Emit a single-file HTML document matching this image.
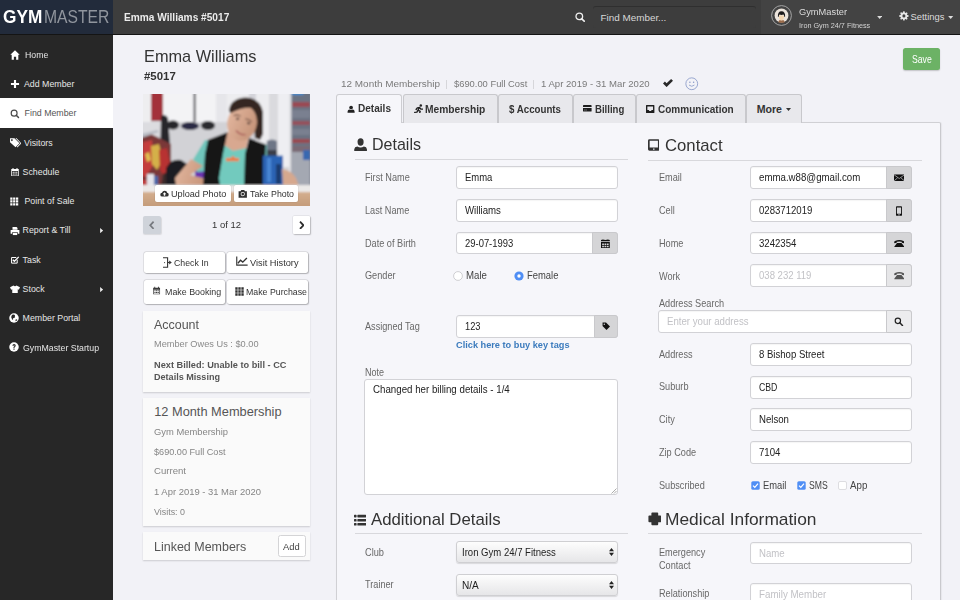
<!DOCTYPE html>
<html><head><meta charset="utf-8"><title>GymMaster</title>
<style>
html,body{margin:0;padding:0;width:960px;height:600px;overflow:hidden;background:#f2f2f7}
body{position:relative;font-family:"Liberation Sans",sans-serif}
.t{position:absolute;white-space:nowrap;line-height:1}
.r{position:absolute;box-sizing:border-box}
</style></head><body>
<div class="r" style="left:0.00px;top:0.00px;width:960.00px;height:600.00px;background:#f2f2f7"></div>
<div class="r" style="left:0.00px;top:0.00px;width:960.00px;height:34.00px;background:#3d3d3d"></div>
<div class="r" style="left:0.00px;top:33.60px;width:960.00px;height:1.40px;background:#141414"></div>
<div class="r" style="left:0.00px;top:0.00px;width:113.00px;height:33.60px;background:#222b3b"></div>
<div class="r" style="left:0.00px;top:35.00px;width:113.00px;height:565.00px;background:#272727"></div>
<div class="t" style="left:2.70px;top:8.97px;font-size:17.8px;color:#fff;font-weight:700;transform:scaleX(0.9692);transform-origin:0 0;">GYM</div>
<div class="t" style="left:43.50px;top:8.97px;font-size:17.8px;color:#90959d;transform:scaleX(0.8831);transform-origin:0 0;">MASTER</div>
<div class="t" style="left:123.50px;top:12.53px;font-size:10.2px;color:#ececec;font-weight:700;transform:scaleX(0.9949);transform-origin:0 0;">Emma Williams #5017</div>
<div class="r" style="left:592.50px;top:6.00px;width:163.50px;height:22.00px;background:#3d3d3d;border-radius:3px;box-shadow:inset 0 1px 0.6px rgba(0,0,0,0.22)"></div>
<svg class="r" style="left:575.20px;top:11.60px;" width="10" height="10" viewBox="0 0 10 10" fill="#fff"><circle cx="4.3" cy="4.4" r="3.3" fill="none" stroke="#f0f0f0" stroke-width="1.3"/><path d="M6.7 6.8 L9.2 9.2" stroke="#f0f0f0" stroke-width="1.6" stroke-linecap="round"/></svg>
<div class="t" style="left:600.50px;top:13.38px;font-size:9.9px;color:#d8d8d8;">Find Member...</div>
<div class="r" style="left:760.60px;top:0.00px;width:199.40px;height:33.60px;background:#434343"></div>
<svg class="r" style="left:771.00px;top:4.80px;" width="21" height="21" viewBox="0 0 21 21" fill="#000"><circle cx="10.5" cy="10.5" r="9.9" fill="none" stroke="#b0b0b0" stroke-width="0.9"/><circle cx="10.5" cy="10.5" r="6.9" fill="#ece4dc"/><path d="M8.2 15.2 H12.8 L13.8 17.2 Q10.5 18.3 7.2 17.2Z" fill="#9a6a48"/><path d="M7.9 10.5 Q7.9 15.3 10.5 15.5 Q13.1 15.3 13.1 10.5Z" fill="#f3d6b0"/><path d="M6.9 11.8 Q6.6 6.3 10.5 6.3 Q14.4 6.3 14.1 11.8 L13.2 11.8 Q13.2 9.8 12.5 9.6 Q10.5 10.2 8.5 9.6 Q7.8 9.8 7.8 11.8Z" fill="#1c1a1a"/></svg>
<div class="t" style="left:798.50px;top:7.44px;font-size:9.6px;color:#dcdcdc;transform:scaleX(0.9677);transform-origin:0 0;">GymMaster</div>
<div class="t" style="left:798.50px;top:22.04px;font-size:7.6px;color:#d4d4d4;transform:scaleX(0.9537);transform-origin:0 0;">Iron Gym 24/7 Fitness</div>
<svg class="r" style="left:877.00px;top:15.60px;" width="5.4" height="3.4" viewBox="0 0 6 4" fill="#ddd"><path d="M0 0H6L3 3.5Z"/></svg>
<svg class="r" style="left:898.80px;top:10.80px;" width="9.8" height="9.8" viewBox="0 0 16 16" fill="#e8e8e8"><path d="M6.9 0.5h2.2l0.4 2.1 1.3 0.55 1.8-1.2 1.55 1.55-1.2 1.8 0.55 1.3 2.1 0.4v2.2l-2.1 0.4-0.55 1.3 1.2 1.8-1.55 1.55-1.8-1.2-1.3 0.55-0.4 2.1H6.9l-0.4-2.1-1.3-0.55-1.8 1.2-1.55-1.55 1.2-1.8-0.55-1.3-2.1-0.4V6.9l2.1-0.4 0.55-1.3-1.2-1.8 1.55-1.55 1.8 1.2 1.3-0.55Z"/><circle cx="8" cy="8" r="2.5" fill="#404040"/></svg>
<div class="t" style="left:910.50px;top:11.81px;font-size:9.4px;color:#dcdcdc;">Settings</div>
<svg class="r" style="left:948.20px;top:15.80px;" width="5.4" height="3.4" viewBox="0 0 6 4" fill="#ddd"><path d="M0 0H6L3 3.5Z"/></svg>
<svg class="r" style="left:9.60px;top:49.95px;" width="10" height="10" viewBox="0 0 16 16" fill="#fff"><path d="M8 0.5 L15.5 7.6 L13.3 7.6 L13.3 15.5 L9.8 15.5 L9.8 10.8 L6.2 10.8 L6.2 15.5 L2.7 15.5 L2.7 7.6 L0.5 7.6 Z"/></svg>
<div class="t" style="left:24.60px;top:50.67px;font-size:8.8px;color:#e6e6e6;transform:scaleX(0.9924);transform-origin:0 0;">Home</div>
<svg class="r" style="left:9.60px;top:79.25px;" width="10" height="10" viewBox="0 0 16 16" fill="#fff"><path d="M6.3 1.5h3.4v4.8h4.8v3.4H9.7v4.8H6.3V9.7H1.5V6.3h4.8z"/></svg>
<div class="t" style="left:24.00px;top:79.97px;font-size:8.8px;color:#e6e6e6;">Add Member</div>
<div class="r" style="left:0.00px;top:98.40px;width:113.00px;height:30.10px;background:#fff"></div>
<svg class="r" style="left:9.60px;top:108.55px;" width="10" height="10" viewBox="0 0 16 16" fill="#4a4a4a"><circle cx="6.6" cy="6.6" r="4.7" fill="none" stroke="#4a4a4a" stroke-width="1.9"/><path d="M10 10 L13.6 13.6" stroke="#4a4a4a" stroke-width="2.3" stroke-linecap="round"/></svg>
<div class="t" style="left:24.60px;top:109.27px;font-size:8.8px;color:#555;">Find Member</div>
<svg class="r" style="left:9.80px;top:137.65px;" width="11.5" height="10" viewBox="0 0 16 14" fill="#fff"><path d="M0 0.5 H6.2 L13.2 7.5 L7.7 13 L0 5.8 Z M2.6 1.8 A1.2 1.2 0 1 0 2.61 1.8Z" fill-rule="evenodd"/><path d="M7.6 0.5 H9.2 L16 7.5 L10.3 13.2 L9.5 12.4 L14.4 7.5Z"/></svg>
<div class="t" style="left:24.00px;top:138.57px;font-size:8.8px;color:#e6e6e6;">Visitors</div>
<svg class="r" style="left:9.60px;top:167.15px;" width="10" height="10" viewBox="0 0 16 16" fill="#fff"><path d="M2 3h12v11.5H2z M3.2 6.5v7h9.6v-7z" fill-rule="evenodd"/><path d="M4 1.5h1.6v3H4z M10.4 1.5H12v3h-1.6z"/><path d="M4.2 7.6h2v1.6h-2z M7 7.6h2v1.6H7z M9.8 7.6h2v1.6h-2z M4.2 10.4h2v1.6h-2z M7 10.4h2v1.6H7z M9.8 10.4h2v1.6h-2z"/></svg>
<div class="t" style="left:22.60px;top:167.87px;font-size:8.8px;color:#e6e6e6;">Schedule</div>
<svg class="r" style="left:10.00px;top:196.85px;" width="8.5" height="8.8" viewBox="0 0 16 16" fill="#fff"><path d="M0.5 0.5h4.2v4.2H0.5z M5.9 0.5h4.2v4.2H5.9z M11.3 0.5h4.2v4.2h-4.2z M0.5 5.9h4.2v4.2H0.5z M5.9 5.9h4.2v4.2H5.9z M11.3 5.9h4.2v4.2h-4.2z M0.5 11.3h4.2v4.2H0.5z M5.9 11.3h4.2v4.2H5.9z M11.3 11.3h4.2v4.2h-4.2z"/></svg>
<div class="t" style="left:24.50px;top:197.17px;font-size:8.8px;color:#e6e6e6;">Point of Sale</div>
<svg class="r" style="left:9.60px;top:225.75px;" width="10" height="10" viewBox="0 0 16 16" fill="#fff"><path d="M4 1.5h6.5l1.5 1.5v3H4z"/><path d="M1 6.5h14v6h-2.5v-2.5h-9v2.5H1z"/><path d="M4.5 11h7v3.5h-7z"/></svg>
<div class="t" style="left:22.60px;top:226.47px;font-size:8.8px;color:#e6e6e6;">Report &amp; Till</div>
<svg class="r" style="left:99.80px;top:228.15px;" width="3.2" height="5.2" viewBox="0 0 4 7" fill="#eee"><path d="M0 0 L4 3.5 L0 7Z"/></svg>
<svg class="r" style="left:9.60px;top:255.05px;" width="10" height="10" viewBox="0 0 16 16" fill="#fff"><path d="M11.5 7.5v5.5h-9v-9h7.5" fill="none" stroke="#fff" stroke-width="1.6"/><path d="M4.5 7.5 L7 10 L14 3" fill="none" stroke="#fff" stroke-width="2"/></svg>
<div class="t" style="left:22.60px;top:255.77px;font-size:8.8px;color:#e6e6e6;">Task</div>
<svg class="r" style="left:9.60px;top:284.35px;" width="10" height="10" viewBox="0 0 16 16" fill="#fff"><path d="M5.6 2.5 Q8 4.6 10.4 2.5 L16 5.2 L14.2 9 L12.4 8.4 L12.4 14.5 L3.6 14.5 L3.6 8.4 L1.8 9 L0 5.2Z"/></svg>
<div class="t" style="left:22.60px;top:285.07px;font-size:8.8px;color:#e6e6e6;">Stock</div>
<svg class="r" style="left:99.80px;top:286.75px;" width="3.2" height="5.2" viewBox="0 0 4 7" fill="#eee"><path d="M0 0 L4 3.5 L0 7Z"/></svg>
<svg class="r" style="left:8.90px;top:313.05px;" width="10" height="10" viewBox="0 0 16 16" fill="#fff"><circle cx="8" cy="8" r="7.6"/><path d="M5.2 2.6 Q8.5 1.6 9.6 3.6 Q8.8 5.4 9.8 6.4 Q9 8.2 7.2 8 Q5.8 9 6.6 10.6 Q5.2 11.2 4.4 9.6 Q4.8 8 3.6 7 Q3.4 4.2 5.2 2.6Z M10.6 10.4 Q12.4 9.6 13.2 10.6 Q12.4 12.8 10.8 13.2 Q10 12 10.6 10.4Z" fill="#272727"/></svg>
<div class="t" style="left:22.60px;top:314.37px;font-size:8.8px;color:#e6e6e6;">Member Portal</div>
<svg class="r" style="left:8.90px;top:342.35px;" width="10" height="10" viewBox="0 0 16 16" fill="#fff"><circle cx="8" cy="8" r="7.6"/><path d="M5.4 6 Q5.6 3.3 8.1 3.3 Q10.8 3.4 10.8 5.8 Q10.8 7.3 9.2 8.1 Q8.9 8.4 8.9 9.4 L7.1 9.4 Q7 7.6 8 7 Q9 6.5 8.9 5.9 Q8.8 5.1 8 5.1 Q7.2 5.1 7.1 6.2Z M7.1 10.4h1.8v2H7.1z" fill="#272727"/></svg>
<div class="t" style="left:22.60px;top:343.67px;font-size:8.8px;color:#e6e6e6;transform:scaleX(0.9975);transform-origin:0 0;">GymMaster Startup</div>
<div class="t" style="left:144.20px;top:48.36px;font-size:16.4px;color:#333;transform:scaleX(0.9958);transform-origin:0 0;">Emma Williams</div>
<div class="t" style="left:144.20px;top:71.11px;font-size:11.4px;color:#333;font-weight:700;transform:scaleX(1.0030);transform-origin:0 0;">#5017</div>
<svg class="r" style="left:143.00px;top:94.00px;" width="167" height="112" viewBox="0 0 167 112" fill="#000">
<defs><filter id="bl" x="-2%" y="-2%" width="104%" height="104%"><feGaussianBlur stdDeviation="1.1"/></filter>
<linearGradient id="skin" x1="0" y1="0" x2="1" y2="0.3"><stop offset="0" stop-color="#e4b8a0"/><stop offset="1" stop-color="#c8967c"/></linearGradient>
<linearGradient id="wood" x1="0" y1="0" x2="0" y2="1"><stop offset="0" stop-color="#d4ae8e"/><stop offset="1" stop-color="#c29a78"/></linearGradient></defs>
<g filter="url(#bl)">
<rect x="-2" y="-2" width="171" height="116" fill="#d4d4d8"/>
<rect x="-2" y="-2" width="10" height="30" fill="#eeeef0"/>
<rect x="20" y="-2" width="54" height="30" fill="#f3f3f5"/>
<rect x="50.5" y="-2" width="2.3" height="31" fill="#66666c"/>
<rect x="8" y="-2" width="12" height="29" fill="#a3323a"/>
<rect x="73" y="-2" width="11" height="39" fill="#e6e6ea"/>
<rect x="84" y="-2" width="63" height="60" fill="#ededf0"/>
<rect x="106" y="-2" width="7" height="60" fill="#d4d4da"/>
<rect x="126" y="-2" width="9" height="60" fill="#dadade"/>
<rect x="135" y="-2" width="11" height="75" fill="#eeeef2"/>
<rect x="146" y="-2" width="2.5" height="94" fill="#e0e0e4"/>
<rect x="148.5" y="-2" width="20" height="94" fill="#6a7282"/>
<rect x="148.5" y="-2" width="12" height="3" fill="#3a8ad0"/>
<rect x="149" y="8" width="18" height="5" fill="#9a4a52"/>
<rect x="149" y="16" width="18" height="8" fill="#7a8090"/>
<rect x="149" y="27" width="18" height="4" fill="#94505a"/>
<rect x="149" y="35" width="18" height="6" fill="#7a8090"/>
<rect x="149" y="45" width="18" height="4" fill="#9a4a50"/>
<rect x="149" y="52" width="18" height="6" fill="#7a6a74"/>
<rect x="149" y="58" width="18" height="34" fill="#a4a8b2"/>
<rect x="160" y="56" width="7" height="10" fill="#3868b0"/>
<rect x="-2" y="28" width="86" height="64" fill="#d2d2d6"/>
<rect x="-2" y="28" width="20" height="14" fill="#dcdce0"/>
<ellipse cx="30" cy="31" rx="6" ry="4.5" fill="#26262c"/>
<ellipse cx="47" cy="32" rx="9" ry="4" fill="#2a2a44"/>
<ellipse cx="65" cy="31.5" rx="7" ry="4.5" fill="#2a2a2e"/>
<path d="M18 22 Q22 19 25 24 L27 50 L26 68 L17 68 Z" fill="#26262c"/>
<path d="M-2 42 L8 40 L28 50 L28 92 L-2 92Z" fill="#7a3838"/>
<path d="M-2 40 L14 36 L16 38 L-2 44Z" fill="#b8bcc4"/>
<path d="M0 48 L9 46 L11 70 L2 84 L-2 80Z" fill="#c43c3c"/>
<path d="M8 52 L16 50 L20 66 L14 76 L9 70Z" fill="#d4b048"/>
<path d="M16 56 L24 54 L27 70 L22 84 L17 76Z" fill="#b83030"/>
<path d="M2 60 L6 58 L8 66 L4 68Z" fill="#e0c050"/>
<rect x="4" y="80" width="7" height="11" fill="#e4e4ea"/>
<rect x="11" y="82" width="4" height="9" fill="#4a66a8"/>
<path d="M20 80 L28 76 L28 92 L18 92Z" fill="#3a2c2c"/>
<rect x="-2" y="86" width="6" height="6" fill="#c04040"/>
<path d="M23 74 Q28 64 38 66 L44 70 L44 91 L23 91Z" fill="#1e1e22"/>
<rect x="52" y="76" width="12" height="12" fill="#6a30b0"/>
<path d="M48 69 L62 46 L70 47 L68 77 L54 78 Z" fill="#70c6bc"/>
<path d="M48 65 L60 72 L47 81 L64 85 L66 92 L33 92 L32 84 Z" fill="url(#skin)"/>
<rect x="75" y="52" width="28" height="40" fill="#72cabe"/>
<path d="M119 49 L126 52 L125 92 L119 92Z" fill="#72cabe"/>
<path d="M84 38 L106 42 L103 54 L90 57 L80 50Z" fill="#d8a890"/>
<path d="M65 45.7 L84.5 38.3 L80 60 L76 84 L77 92 L60 92 L62 60Z" fill="#121215"/>
<path d="M106 44 L122.8 50.4 L121 92 L101 92 L102 60Z" fill="#121215"/>
<path d="M83 64 H96 V67.2 H83Z" fill="#f07a40"/>
<path d="M88 64 L90 61.5 L92 64Z" fill="#f07a40"/>
<path d="M86 16 Q88 4 103 3.5 Q117 4 120 18 L120 40 L117 46 L112 44 L110 18 Q102 10 88 20Z" fill="#352620"/>
<ellipse cx="99" cy="29" rx="14.8" ry="17.8" transform="rotate(12 99 29)" fill="url(#skin)"/>
<path d="M86 17 Q92 7 104 6.5 Q115 7 118 16 Q104 10.5 88 19Z" fill="#352620"/>
<path d="M109 14 Q114 16 114 26 L118 30 L118 16Z" fill="#352620"/>
<path d="M90.5 21.5 Q94 20 97.5 22" stroke="#4a3028" stroke-width="1" fill="none"/>
<path d="M102.5 25 Q106 25 109 28" stroke="#4a3028" stroke-width="1" fill="none"/>
<ellipse cx="94.6" cy="24.7" rx="1.7" ry="1" fill="#3a2a28"/>
<ellipse cx="105.6" cy="29.2" rx="1.7" ry="1" transform="rotate(20 105.6 29.2)" fill="#3a2a28"/>
<path d="M93 36.5 Q97.5 41.5 102.5 40.5" stroke="#a85a58" stroke-width="1.4" fill="none"/>
<path d="M123.8 47 Q129 44 134 47 L134 62 L123.8 62Z" fill="#6e7686"/>
<rect x="124" y="56" width="10" height="6" fill="#3a3e4a"/>
<rect x="120" y="61.6" width="20" height="30.4" fill="#2a64b4"/>
<rect x="124" y="64" width="4" height="24" fill="#4a86d4"/>
<rect x="133" y="70" width="5" height="20" fill="#1a3a70"/>
<path d="M139 75 Q148 76 153 84 L158 98 L150 101 L140 92Z" fill="#d6a88e"/>
<rect x="-2" y="91" width="171" height="7" fill="#ebe9e8"/>
<rect x="-2" y="98" width="171" height="16" fill="url(#wood)"/>
</g>
</svg>
<div class="r" style="left:155.00px;top:185.30px;width:76.00px;height:16.70px;background:#fff;border-radius:2px;box-shadow:0 0 0 0.5px rgba(0,0,0,0.08)"></div>
<div class="r" style="left:233.70px;top:185.30px;width:64.30px;height:16.70px;background:#fff;border-radius:2px;box-shadow:0 0 0 0.5px rgba(0,0,0,0.08)"></div>
<svg class="r" style="left:159.50px;top:189.00px;" width="9" height="9" viewBox="0 0 16 16" fill="#333"><path d="M4 13.5 Q0.5 13.5 0.5 10 Q0.5 7 3.5 6.8 Q4.5 3 8.5 3 Q12.3 3 12.8 6.8 Q15.5 7.3 15.5 10.2 Q15.5 13.5 12 13.5Z"/><path d="M8 5.8 L11.2 9.2 L9.2 9.2 L9.2 12 L6.8 12 L6.8 9.2 L4.8 9.2Z" fill="#fff"/></svg>
<div class="t" style="left:170.60px;top:189.23px;font-size:9.5px;color:#333;transform:scaleX(0.9606);transform-origin:0 0;">Upload Photo</div>
<svg class="r" style="left:238.00px;top:189.00px;" width="9.5" height="9" viewBox="0 0 16 15" fill="#333"><path d="M5.5 1.5h5l1.2 2H15v11H1v-11h3.3z"/><circle cx="8" cy="8.5" r="3.6" fill="#fff"/><circle cx="8" cy="8.5" r="2.3"/></svg>
<div class="t" style="left:249.70px;top:189.23px;font-size:9.5px;color:#333;transform:scaleX(0.9258);transform-origin:0 0;">Take Photo</div>
<div class="r" style="left:143.30px;top:216.00px;width:17.90px;height:18.00px;background:#cfd3da;border-radius:2px;box-shadow:0.5px 1px 1px rgba(0,0,0,0.1)"></div>
<svg class="r" style="left:149.40px;top:220.60px;" width="5.5" height="8.6" viewBox="0 0 5.5 8.6" fill="none"><path d="M4.6 0.7 L1.2 4.3 L4.6 7.9" fill="none" stroke="#76797e" stroke-width="1.7"/></svg>
<div class="r" style="left:293.30px;top:215.80px;width:16.30px;height:18.00px;background:#fff;border-radius:1px;box-shadow:0 0 0 0.5px rgba(0,0,0,0.1),1px 1px 1.5px rgba(0,0,0,0.2)"></div>
<svg class="r" style="left:298.60px;top:220.60px;" width="5.5" height="8.6" viewBox="0 0 5.5 8.6" fill="none"><path d="M1 0.7 L4.4 4.3 L1 7.9" fill="none" stroke="#2e2e2e" stroke-width="1.8"/></svg>
<div class="t" style="left:212.20px;top:219.87px;font-size:9.8px;color:#333;transform:scaleX(0.9677);transform-origin:0 0;">1 of 12</div>
<div class="r" style="left:143.50px;top:251.50px;width:81.10px;height:21.00px;background:#fff;border-radius:2.5px;box-shadow:0 0 0 0.7px rgba(0,0,0,0.12),1px 1px 1.2px rgba(0,0,0,0.2)"></div>
<div class="r" style="left:227.00px;top:251.50px;width:81.10px;height:21.00px;background:#fff;border-radius:2.5px;box-shadow:0 0 0 0.7px rgba(0,0,0,0.12),1px 1px 1.2px rgba(0,0,0,0.2)"></div>
<div class="r" style="left:143.50px;top:280.30px;width:81.10px;height:23.50px;background:#fff;border-radius:2.5px;box-shadow:0 0 0 0.7px rgba(0,0,0,0.12),1px 1px 1.2px rgba(0,0,0,0.2)"></div>
<div class="r" style="left:227.00px;top:280.30px;width:81.10px;height:23.50px;background:#fff;border-radius:2.5px;box-shadow:0 0 0 0.7px rgba(0,0,0,0.12),1px 1px 1.2px rgba(0,0,0,0.2)"></div>
<svg class="r" style="left:160.80px;top:257.00px;" width="11" height="11" viewBox="0 0 11 11" fill="none"><path d="M2 0.8 H6.6 V10.2 H2" fill="none" stroke="#333" stroke-width="1.1"/><circle cx="3.6" cy="5.6" r="0.55" fill="#333"/><path d="M6.6 5.5 H8.6" stroke="#333" stroke-width="1.1"/><path d="M8.2 3.4 L10.8 5.5 L8.2 7.6Z" fill="#333"/></svg>
<div class="t" style="left:173.80px;top:257.73px;font-size:9.5px;color:#333;transform:scaleX(0.9203);transform-origin:0 0;">Check In</div>
<svg class="r" style="left:236.00px;top:256.00px;" width="12" height="10" viewBox="0 0 16 13" fill="none"><path d="M1 0.5 V12 H15.5" fill="none" stroke="#333" stroke-width="1.5"/><path d="M2.5 9.5 L6 5.5 L9 8 L14.5 2.5" fill="none" stroke="#333" stroke-width="1.8"/></svg>
<div class="t" style="left:249.80px;top:257.73px;font-size:9.5px;color:#333;transform:scaleX(0.9706);transform-origin:0 0;">Visit History</div>
<svg class="r" style="left:151.60px;top:286.20px;" width="9.2" height="9.2" viewBox="0 0 16 16" fill="#3a3a3a"><path d="M2 3h12v11.5H2z M3.2 6.5v7h9.6v-7z" fill-rule="evenodd"/><path d="M4 1.5h1.6v3H4z M10.4 1.5H12v3h-1.6z"/><path d="M4.2 7.6h2v1.6h-2z M7 7.6h2v1.6H7z M9.8 7.6h2v1.6h-2z M4.2 10.4h2v1.6h-2z M7 10.4h2v1.6H7z M9.8 10.4h2v1.6h-2z"/></svg>
<div class="t" style="left:164.80px;top:287.32px;font-size:9.5px;color:#333;transform:scaleX(0.9335);transform-origin:0 0;">Make Booking</div>
<svg class="r" style="left:235.20px;top:286.50px;" width="9" height="9" viewBox="0 0 16 16" fill="#333"><path d="M0.5 0.5h4.2v4.2H0.5z M5.9 0.5h4.2v4.2H5.9z M11.3 0.5h4.2v4.2h-4.2z M0.5 5.9h4.2v4.2H0.5z M5.9 5.9h4.2v4.2H5.9z M11.3 5.9h4.2v4.2h-4.2z M0.5 11.3h4.2v4.2H0.5z M5.9 11.3h4.2v4.2H5.9z M11.3 11.3h4.2v4.2h-4.2z"/></svg>
<div class="t" style="left:245.80px;top:287.32px;font-size:9.5px;color:#333;transform:scaleX(0.9242);transform-origin:0 0;">Make Purchase</div>
<div class="r" style="left:143.00px;top:311.40px;width:167.00px;height:80.60px;background:#fafafa;box-shadow:0 1px 1.5px rgba(0,0,0,0.16)"></div>
<div class="t" style="left:154.20px;top:319.42px;font-size:12.8px;color:#555;transform:scaleX(0.9730);transform-origin:0 0;">Account</div>
<div class="t" style="left:154.20px;top:339.31px;font-size:9.4px;color:#8a8a8a;transform:scaleX(0.9834);transform-origin:0 0;">Member Owes Us : $0.00</div>
<div class="t" style="left:154.20px;top:360.60px;font-size:9.3px;color:#555;font-weight:700;transform:scaleX(0.9901);transform-origin:0 0;">Next Billed: Unable to bill - CC</div>
<div class="t" style="left:154.20px;top:373.40px;font-size:9.3px;color:#555;font-weight:700;transform:scaleX(0.9748);transform-origin:0 0;">Details Missing</div>
<div class="r" style="left:143.00px;top:398.40px;width:167.00px;height:127.60px;background:#fafafa;box-shadow:0 1px 1.5px rgba(0,0,0,0.16)"></div>
<div class="t" style="left:154.20px;top:406.12px;font-size:12.8px;color:#555;">12 Month Membership</div>
<div class="t" style="left:154.20px;top:427.80px;font-size:9.3px;color:#858585;transform:scaleX(1.0084);transform-origin:0 0;">Gym Membership</div>
<div class="t" style="left:154.20px;top:447.90px;font-size:9.3px;color:#858585;transform:scaleX(0.9809);transform-origin:0 0;">$690.00 Full Cost</div>
<div class="t" style="left:154.20px;top:467.40px;font-size:9.3px;color:#858585;transform:scaleX(1.0317);transform-origin:0 0;">Current</div>
<div class="t" style="left:154.20px;top:487.70px;font-size:9.3px;color:#858585;transform:scaleX(1.0145);transform-origin:0 0;">1 Apr 2019 - 31 Mar 2020</div>
<div class="t" style="left:154.20px;top:507.79px;font-size:9.3px;color:#858585;transform:scaleX(0.9570);transform-origin:0 0;">Visits: 0</div>
<div class="r" style="left:143.00px;top:532.40px;width:167.00px;height:27.60px;background:#fafafa;box-shadow:0 1px 1.5px rgba(0,0,0,0.16)"></div>
<div class="t" style="left:154.20px;top:540.79px;font-size:12.6px;color:#555;transform:scaleX(0.9910);transform-origin:0 0;">Linked Members</div>
<div class="r" style="left:278.20px;top:535.00px;width:27.70px;height:22.10px;background:#fff;border-radius:2.5px;border:1px solid #d4d4d6"></div>
<div class="t" style="left:283.40px;top:541.64px;font-size:9.6px;color:#444;transform:scaleX(0.9778);transform-origin:0 0;">Add</div>
<div class="t" style="left:340.80px;top:79.14px;font-size:9.6px;color:#7a7a7a;transform:scaleX(1.0365);transform-origin:0 0;">12 Month Membership</div>
<div class="r" style="left:446.00px;top:80.00px;width:1.20px;height:9.00px;background:#d6d6da"></div>
<div class="t" style="left:453.50px;top:79.14px;font-size:9.6px;color:#7a7a7a;transform:scaleX(0.9755);transform-origin:0 0;">$690.00 Full Cost</div>
<div class="r" style="left:532.80px;top:80.00px;width:1.20px;height:9.00px;background:#d6d6da"></div>
<div class="t" style="left:540.70px;top:79.14px;font-size:9.6px;color:#7a7a7a;transform:scaleX(0.9975);transform-origin:0 0;">1 Apr 2019 - 31 Mar 2020</div>
<svg class="r" style="left:663.20px;top:78.60px;" width="10" height="8.2" viewBox="0 0 10 8.2" fill="#2a2a2a"><path d="M0 4.4 L1.9 2.6 L3.6 4.3 L8.1 0 L10 1.8 L3.6 8.1Z"/></svg>
<svg class="r" style="left:685.10px;top:77.10px;" width="13.5" height="13.5" viewBox="0 0 16 16" fill="none"><circle cx="8" cy="8" r="7" fill="none" stroke="#8a9ac8" stroke-width="1"/><circle cx="5.8" cy="6.2" r="0.9" fill="#8a9ac8"/><circle cx="10.2" cy="6.2" r="0.9" fill="#8a9ac8"/><path d="M4.8 9.5 Q8 12.5 11.2 9.5" fill="none" stroke="#8a9ac8" stroke-width="1"/></svg>
<div class="r" style="left:903.30px;top:47.80px;width:36.70px;height:22.20px;background:#6cb265;border-radius:2.5px;box-shadow:0 1px 1.5px rgba(0,0,0,0.2)"></div>
<div class="t" style="left:911.70px;top:53.59px;font-size:10.6px;color:#fff;transform:scaleX(0.8196);transform-origin:0 0;">Save</div>
<div class="r" style="left:336.40px;top:122.20px;width:604.80px;height:497.80px;background:#f6f6fa;border:1px solid #d0d0d4;border-right:1.5px solid #c9c9cd;border-top-right-radius:2px;box-shadow:0.5px 0 1px rgba(0,0,0,0.05)"></div>
<div class="r" style="left:336.40px;top:94.10px;width:65.80px;height:29.20px;background:#f6f6fa;border:1px solid #cdcdd1;border-bottom:none;border-radius:3px 3px 0 0"></div>
<div class="r" style="left:402.60px;top:94.10px;width:95.00px;height:28.80px;background:#e8e8ec;border:1px solid #c8c8cc;border-bottom:none;border-radius:3px 3px 0 0"></div>
<div class="r" style="left:497.90px;top:94.10px;width:74.70px;height:28.80px;background:#e8e8ec;border:1px solid #c8c8cc;border-bottom:none;border-radius:3px 3px 0 0"></div>
<div class="r" style="left:572.90px;top:94.10px;width:62.90px;height:28.80px;background:#e8e8ec;border:1px solid #c8c8cc;border-bottom:none;border-radius:3px 3px 0 0"></div>
<div class="r" style="left:636.10px;top:94.10px;width:109.70px;height:28.80px;background:#e8e8ec;border:1px solid #c8c8cc;border-bottom:none;border-radius:3px 3px 0 0"></div>
<div class="r" style="left:746.10px;top:94.10px;width:55.80px;height:28.80px;background:#e8e8ec;border:1px solid #c8c8cc;border-bottom:none;border-radius:3px 3px 0 0"></div>
<svg class="r" style="left:346.90px;top:104.90px;" width="8.2" height="8.2" viewBox="0 0 16 16" fill="#222"><circle cx="8" cy="5" r="3.6"/><path d="M1 15 Q1 9.2 5 9 Q8 11 11 9 Q15 9.2 15 15Z"/></svg>
<div class="t" style="left:358.00px;top:103.39px;font-size:10.6px;color:#333;font-weight:700;transform:scaleX(0.9494);transform-origin:0 0;">Details</div>
<svg class="r" style="left:413.50px;top:103.80px;" width="9.4" height="9.6" viewBox="0 0 16 16" fill="#222"><circle cx="11.6" cy="2.3" r="2.1"/><path d="M9.3 5.6 L6.8 10.4 M9.3 5.6 L5.6 6.3 L3.6 9.2 M9.3 5.6 L11.6 8.4 L14.6 8.6 M6.8 10.4 L10.6 12.3 L9.6 15.4 M6.8 10.4 L5 13.6 L1.2 14" fill="none" stroke="#222" stroke-width="2.3" stroke-linecap="round" stroke-linejoin="round"/></svg>
<div class="t" style="left:425.20px;top:103.89px;font-size:10.6px;color:#333;font-weight:700;transform:scaleX(0.9658);transform-origin:0 0;">Membership</div>
<div class="t" style="left:508.80px;top:103.89px;font-size:10.6px;color:#333;font-weight:700;transform:scaleX(0.9164);transform-origin:0 0;">$ Accounts</div>
<svg class="r" style="left:583.40px;top:105.40px;" width="8.6" height="6.6" viewBox="0 0 16 12" fill="#1e1e1e"><path d="M1.2 0H14.8Q16 0 16 1.2V3.6H0V1.2Q0 0 1.2 0Z M0 5.4H16V10.8Q16 12 14.8 12H1.2Q0 12 0 10.8Z"/><path d="M2.2 8.6H4.2V9.8H2.2Z M5 8.6H7V9.8H5Z" fill="#e8e8ec"/></svg>
<div class="t" style="left:594.50px;top:103.89px;font-size:10.6px;color:#333;font-weight:700;transform:scaleX(0.9048);transform-origin:0 0;">Billing</div>
<svg class="r" style="left:646.20px;top:104.90px;" width="8.4" height="8" viewBox="0 0 16 15" fill="#1e1e1e"><path d="M0 1Q0 0 1 0H15Q16 0 16 1V14Q16 15 15 15H1Q0 15 0 14Z M2.6 2.6V9.6H5.2L6.4 11.2H9.6L10.8 9.6H13.4V2.6Z" fill-rule="evenodd"/></svg>
<div class="t" style="left:657.70px;top:103.89px;font-size:10.6px;color:#333;font-weight:700;transform:scaleX(0.9451);transform-origin:0 0;">Communication</div>
<div class="t" style="left:756.70px;top:103.89px;font-size:10.6px;color:#333;font-weight:700;">More</div>
<svg class="r" style="left:786.00px;top:108.30px;" width="5" height="3" viewBox="0 0 5 3" fill="#333"><path d="M0 0H5L2.5 3Z"/></svg>
<svg class="r" style="left:354.00px;top:137.90px;" width="13.2" height="13.2" viewBox="0 0 16 16" fill="#333"><ellipse cx="8" cy="4.8" rx="3.7" ry="4.5"/><path d="M0.3 16 V13.6 Q0.6 10.6 4 10.2 Q8 12.6 12 10.2 Q15.4 10.6 15.7 13.6 V16Z"/></svg>
<div class="t" style="left:372.30px;top:136.16px;font-size:16.4px;color:#333;transform:scaleX(0.9774);transform-origin:0 0;">Details</div>
<div class="r" style="left:354.70px;top:159.10px;width:273.30px;height:1.30px;background:#d8d8dc"></div>
<svg class="r" style="left:647.80px;top:138.70px;" width="11.6" height="12" viewBox="0 0 16 16" fill="#333"><path d="M2 0H14Q16 0 16 2V14Q16 16 14 16H2Q0 16 0 14V2Q0 0 2 0Z M2.3 2.3V11.5H13.7V2.3Z M7 12.8H9V14.5H7Z" fill-rule="evenodd"/></svg>
<div class="t" style="left:665.00px;top:136.66px;font-size:16.4px;color:#333;transform:scaleX(1.0192);transform-origin:0 0;">Contact</div>
<div class="r" style="left:647.80px;top:159.50px;width:274.20px;height:1.30px;background:#d8d8dc"></div>
<div class="t" style="left:364.70px;top:173.13px;font-size:10.2px;color:#686868;transform:scaleX(0.8984);transform-origin:0 0;">First Name</div>
<div class="r" style="left:456.00px;top:166.40px;width:162.10px;height:22.60px;background:#fff;border:1px solid #d2d2d6;border-radius:3px;box-shadow:inset 0 1px 1px rgba(0,0,0,0.04)"></div>
<div class="t" style="left:464.50px;top:173.33px;font-size:10.2px;color:#222;transform:scaleX(0.9295);transform-origin:0 0;">Emma</div>
<div class="t" style="left:364.70px;top:205.93px;font-size:10.2px;color:#686868;transform:scaleX(0.8980);transform-origin:0 0;">Last Name</div>
<div class="r" style="left:456.00px;top:199.20px;width:162.10px;height:22.60px;background:#fff;border:1px solid #d2d2d6;border-radius:3px;box-shadow:inset 0 1px 1px rgba(0,0,0,0.04)"></div>
<div class="t" style="left:464.50px;top:206.13px;font-size:10.2px;color:#222;transform:scaleX(0.9483);transform-origin:0 0;">Williams</div>
<div class="t" style="left:364.70px;top:238.53px;font-size:10.2px;color:#686868;transform:scaleX(0.8980);transform-origin:0 0;">Date of Birth</div>
<div class="r" style="left:456.00px;top:231.80px;width:162.10px;height:22.60px;background:#fff;border:1px solid #d2d2d6;border-radius:3px;box-shadow:inset 0 1px 1px rgba(0,0,0,0.04)"></div>
<div class="r" style="left:592.10px;top:231.80px;width:26.00px;height:22.60px;background:#d5d5d7;border:1px solid #c9c9cc;border-radius:0 3px 3px 0"></div>
<svg class="r" style="left:599.70px;top:237.70px;" width="10.8" height="10.8" viewBox="0 0 16 16" fill="#111"><path d="M1.5 3 Q4 1.5 8 3 Q12 1.5 14.5 3 V5 H1.5Z M1.5 6H14.5V15.5H1.5Z"/><path d="M3.2 8h2.6v2.2H3.2z M6.7 8h2.6v2.2H6.7z M10.2 8h2.6v2.2h-2.6z M3.2 11.5h2.6v2.2H3.2z M6.7 11.5h2.6v2.2H6.7z M10.2 11.5h2.6v2.2h-2.6z" fill="#d5d5d7"/></svg>
<div class="t" style="left:464.50px;top:238.73px;font-size:10.2px;color:#222;transform:scaleX(0.9258);transform-origin:0 0;">29-07-1993</div>
<div class="t" style="left:364.70px;top:271.33px;font-size:10.2px;color:#686868;transform:scaleX(0.8980);transform-origin:0 0;">Gender</div>
<svg class="r" style="left:453.00px;top:271.00px;" width="10" height="10" viewBox="0 0 10 10" fill="none"><circle cx="5" cy="5" r="4.4" fill="#fff" stroke="#c4c4c8" stroke-width="0.8"/></svg>
<div class="t" style="left:466.00px;top:270.90px;font-size:10px;color:#444;transform:scaleX(0.9640);transform-origin:0 0;">Male</div>
<svg class="r" style="left:513.70px;top:271.00px;" width="10" height="10" viewBox="0 0 10 10" fill="none"><circle cx="5" cy="5" r="4.6" fill="#4f8ef5"/><circle cx="5" cy="5" r="1.7" fill="#fff"/></svg>
<div class="t" style="left:526.50px;top:270.90px;font-size:10px;color:#444;transform:scaleX(0.9415);transform-origin:0 0;">Female</div>
<div class="t" style="left:364.70px;top:321.73px;font-size:10.2px;color:#686868;transform:scaleX(0.8980);transform-origin:0 0;">Assigned Tag</div>
<div class="r" style="left:456.00px;top:315.40px;width:162.10px;height:22.60px;background:#fff;border:1px solid #d2d2d6;border-radius:3px;box-shadow:inset 0 1px 1px rgba(0,0,0,0.04)"></div>
<div class="r" style="left:594.10px;top:315.40px;width:24.00px;height:22.60px;background:#d5d5d7;border:1px solid #c9c9cc;border-radius:0 3px 3px 0"></div>
<svg class="r" style="left:601.85px;top:322.45px;" width="8.5" height="8.5" viewBox="0 0 16 16" fill="#111"><path d="M1 1H7.5L15 8.5L8.5 15L1 7.5Z"/><circle cx="4.3" cy="4.3" r="1.4" fill="#d5d5d7"/></svg>
<div class="t" style="left:464.50px;top:322.33px;font-size:10.2px;color:#222;transform:scaleX(0.9110);transform-origin:0 0;">123</div>
<div class="t" style="left:456.00px;top:339.94px;font-size:9.6px;color:#3b7bbd;font-weight:700;transform:scaleX(0.9591);transform-origin:0 0;">Click here to buy key tags</div>
<div class="t" style="left:364.70px;top:367.93px;font-size:10.2px;color:#686868;transform:scaleX(0.8820);transform-origin:0 0;">Note</div>
<div class="r" style="left:364.40px;top:379.40px;width:253.70px;height:115.30px;background:#fff;border:1px solid #d2d2d6;border-radius:3px"></div>
<div class="t" style="left:373.40px;top:385.33px;font-size:10.2px;color:#222;transform:scaleX(0.9543);transform-origin:0 0;">Changed her billing details - 1/4</div>
<svg class="r" style="left:611.00px;top:487.50px;" width="6" height="6" viewBox="0 0 6 6" fill="none"><path d="M5.5 0.5 L0.5 5.5 M5.5 3 L3 5.5" stroke="#888" stroke-width="0.7"/></svg>
<div class="t" style="left:658.75px;top:173.13px;font-size:10.2px;color:#686868;transform:scaleX(0.8980);transform-origin:0 0;">Email</div>
<div class="r" style="left:750.00px;top:166.30px;width:162.00px;height:22.60px;background:#fff;border:1px solid #d2d2d6;border-radius:3px;box-shadow:inset 0 1px 1px rgba(0,0,0,0.04)"></div>
<div class="r" style="left:886.00px;top:166.30px;width:26.00px;height:22.60px;background:#d5d5d7;border:1px solid #c9c9cc;border-radius:0 3px 3px 0"></div>
<svg class="r" style="left:893.75px;top:173.85px;" width="10.5" height="7.5" viewBox="0 0 16 10" fill="#111"><rect x="0" y="0" width="16" height="10"/><path d="M0.3 0.6 L8 6.2 L15.7 0.6 M0.3 9.6 L5.6 5 M15.7 9.6 L10.4 5" fill="none" stroke="#d5d5d7" stroke-width="1"/></svg>
<div class="t" style="left:758.50px;top:173.23px;font-size:10.2px;color:#222;transform:scaleX(0.9502);transform-origin:0 0;">emma.w88@gmail.com</div>
<div class="t" style="left:658.75px;top:206.13px;font-size:10.2px;color:#686868;transform:scaleX(0.8980);transform-origin:0 0;">Cell</div>
<div class="r" style="left:750.00px;top:199.20px;width:162.00px;height:22.60px;background:#fff;border:1px solid #d2d2d6;border-radius:3px;box-shadow:inset 0 1px 1px rgba(0,0,0,0.04)"></div>
<div class="r" style="left:886.00px;top:199.20px;width:26.00px;height:22.60px;background:#d5d5d7;border:1px solid #c9c9cc;border-radius:0 3px 3px 0"></div>
<svg class="r" style="left:896.00px;top:205.50px;" width="6" height="10" viewBox="0 0 10 16" fill="#111"><path d="M1.5 0H8.5Q10 0 10 1.5V14.5Q10 16 8.5 16H1.5Q0 16 0 14.5V1.5Q0 0 1.5 0Z M1.5 2V12.5H8.5V2Z M4 13.5H6V15H4Z" fill-rule="evenodd"/></svg>
<div class="t" style="left:758.50px;top:206.13px;font-size:10.2px;color:#222;transform:scaleX(0.9413);transform-origin:0 0;">0283712019</div>
<div class="t" style="left:658.75px;top:238.73px;font-size:10.2px;color:#686868;transform:scaleX(0.8980);transform-origin:0 0;">Home</div>
<div class="r" style="left:750.00px;top:231.70px;width:162.00px;height:22.60px;background:#fff;border:1px solid #d2d2d6;border-radius:3px;box-shadow:inset 0 1px 1px rgba(0,0,0,0.04)"></div>
<div class="r" style="left:886.00px;top:231.70px;width:26.00px;height:22.60px;background:#d5d5d7;border:1px solid #c9c9cc;border-radius:0 3px 3px 0"></div>
<svg class="r" style="left:893.75px;top:238.60px;" width="10.5" height="8.8" viewBox="0 0 16 12" fill="#111"><path d="M0.3 4.6 Q0 3.2 1.5 2.4 Q8 -0.8 14.5 2.4 Q16 3.2 15.7 4.6 L15.2 5.6 L12 5.2 L11.6 3.6 Q8 2.4 4.4 3.6 L4 5.2 L0.8 5.6Z M4.6 5.4 H11.4 L15.6 11 Q15.6 12 14.6 12 H1.4 Q0.4 12 0.4 11Z"/></svg>
<div class="t" style="left:758.50px;top:238.63px;font-size:10.2px;color:#222;transform:scaleX(0.9419);transform-origin:0 0;">3242354</div>
<div class="t" style="left:658.75px;top:271.53px;font-size:10.2px;color:#686868;transform:scaleX(0.8980);transform-origin:0 0;">Work</div>
<div class="r" style="left:750.00px;top:264.20px;width:162.00px;height:22.60px;background:#fff;border:1px solid #d2d2d6;border-radius:3px;box-shadow:inset 0 1px 1px rgba(0,0,0,0.04)"></div>
<div class="r" style="left:886.00px;top:264.20px;width:26.00px;height:22.60px;background:#e6e6e8;border:1px solid #c9c9cc;border-radius:0 3px 3px 0"></div>
<svg class="r" style="left:893.75px;top:271.10px;" width="10.5" height="8.8" viewBox="0 0 16 12" fill="#555"><path d="M0.3 4.6 Q0 3.2 1.5 2.4 Q8 -0.8 14.5 2.4 Q16 3.2 15.7 4.6 L15.2 5.6 L12 5.2 L11.6 3.6 Q8 2.4 4.4 3.6 L4 5.2 L0.8 5.6Z M4.6 5.4 H11.4 L15.6 11 Q15.6 12 14.6 12 H1.4 Q0.4 12 0.4 11Z"/></svg>
<div class="t" style="left:758.50px;top:271.13px;font-size:10.2px;color:#c2c2c6;transform:scaleX(0.9380);transform-origin:0 0;">038 232 119</div>
<div class="t" style="left:658.75px;top:298.83px;font-size:10.2px;color:#686868;transform:scaleX(0.8980);transform-origin:0 0;">Address Search</div>
<div class="r" style="left:658.10px;top:310.10px;width:253.90px;height:22.60px;background:#fff;border:1px solid #d2d2d6;border-radius:3px;box-shadow:inset 0 1px 1px rgba(0,0,0,0.04)"></div>
<div class="r" style="left:886.00px;top:310.10px;width:26.00px;height:22.60px;background:#ececee;border:1px solid #c9c9cc;border-radius:0 3px 3px 0"></div>
<svg class="r" style="left:894.25px;top:316.65px;" width="9.5" height="9.5" viewBox="0 0 16 16" fill="#111"><circle cx="6.5" cy="6.5" r="4.5" fill="none" stroke="#222" stroke-width="2"/><path d="M9.8 9.8 L14.2 14.2" stroke="#222" stroke-width="2.6" stroke-linecap="round"/></svg>
<div class="t" style="left:667.30px;top:317.03px;font-size:10.2px;color:#c2c2c6;transform:scaleX(0.9480);transform-origin:0 0;">Enter your address</div>
<div class="t" style="left:658.75px;top:349.63px;font-size:10.2px;color:#686868;transform:scaleX(0.8980);transform-origin:0 0;">Address</div>
<div class="r" style="left:750.00px;top:343.40px;width:162.00px;height:22.60px;background:#fff;border:1px solid #d2d2d6;border-radius:3px;box-shadow:inset 0 1px 1px rgba(0,0,0,0.04)"></div>
<div class="t" style="left:758.50px;top:350.33px;font-size:10.2px;color:#222;transform:scaleX(0.9392);transform-origin:0 0;">8 Bishop Street</div>
<div class="t" style="left:658.75px;top:382.43px;font-size:10.2px;color:#686868;transform:scaleX(0.8980);transform-origin:0 0;">Suburb</div>
<div class="r" style="left:750.00px;top:376.25px;width:162.00px;height:22.65px;background:#fff;border:1px solid #d2d2d6;border-radius:3px;box-shadow:inset 0 1px 1px rgba(0,0,0,0.04)"></div>
<div class="t" style="left:758.50px;top:383.20px;font-size:10.2px;color:#222;transform:scaleX(0.8545);transform-origin:0 0;">CBD</div>
<div class="t" style="left:658.75px;top:415.23px;font-size:10.2px;color:#686868;transform:scaleX(0.8980);transform-origin:0 0;">City</div>
<div class="r" style="left:750.00px;top:408.30px;width:162.00px;height:22.60px;background:#fff;border:1px solid #d2d2d6;border-radius:3px;box-shadow:inset 0 1px 1px rgba(0,0,0,0.04)"></div>
<div class="t" style="left:758.50px;top:415.23px;font-size:10.2px;color:#222;transform:scaleX(0.9448);transform-origin:0 0;">Nelson</div>
<div class="t" style="left:658.75px;top:447.93px;font-size:10.2px;color:#686868;transform:scaleX(0.8980);transform-origin:0 0;">Zip Code</div>
<div class="r" style="left:750.00px;top:441.00px;width:162.00px;height:22.60px;background:#fff;border:1px solid #d2d2d6;border-radius:3px;box-shadow:inset 0 1px 1px rgba(0,0,0,0.04)"></div>
<div class="t" style="left:758.50px;top:447.93px;font-size:10.2px;color:#222;transform:scaleX(0.9473);transform-origin:0 0;">7104</div>
<div class="t" style="left:658.75px;top:480.53px;font-size:10.2px;color:#686868;transform:scaleX(0.8980);transform-origin:0 0;">Subscribed</div>
<svg class="r" style="left:751.00px;top:480.70px;" width="9" height="9" viewBox="0 0 9 9" fill="none"><rect x="0.3" y="0.3" width="8.4" height="8.4" rx="1.5" fill="#4f8ef5"/><path d="M2 4.6 L3.8 6.4 L7 2.6" fill="none" stroke="#fff" stroke-width="1.2"/></svg>
<div class="t" style="left:763.30px;top:480.80px;font-size:10px;color:#444;transform:scaleX(0.9356);transform-origin:0 0;">Email</div>
<svg class="r" style="left:797.30px;top:480.70px;" width="9" height="9" viewBox="0 0 9 9" fill="none"><rect x="0.3" y="0.3" width="8.4" height="8.4" rx="1.5" fill="#4f8ef5"/><path d="M2 4.6 L3.8 6.4 L7 2.6" fill="none" stroke="#fff" stroke-width="1.2"/></svg>
<div class="t" style="left:809.00px;top:480.80px;font-size:10px;color:#444;transform:scaleX(0.8629);transform-origin:0 0;">SMS</div>
<svg class="r" style="left:838.30px;top:480.70px;" width="9" height="9" viewBox="0 0 9 9" fill="none"><rect x="0.5" y="0.5" width="8" height="8" rx="1.5" fill="#fff" stroke="#d0d0d4" stroke-width="0.7"/></svg>
<div class="t" style="left:850.00px;top:480.80px;font-size:10px;color:#444;transform:scaleX(0.9725);transform-origin:0 0;">App</div>
<svg class="r" style="left:354.00px;top:513.60px;" width="12.2" height="12.4" viewBox="0 0 16 16" fill="#333"><path d="M0.8 1H2.6Q3.4 1 3.4 1.8V3.6Q3.4 4.4 2.6 4.4H0.8Q0 4.4 0 3.6V1.8Q0 1 0.8 1Z M5.2 1H15.2Q16 1 16 1.8V3.6Q16 4.4 15.2 4.4H5.2Q4.4 4.4 4.4 3.6V1.8Q4.4 1 5.2 1Z M0.8 6.3H2.6Q3.4 6.3 3.4 7.1V8.9Q3.4 9.7 2.6 9.7H0.8Q0 9.7 0 8.9V7.1Q0 6.3 0.8 6.3Z M5.2 6.3H15.2Q16 6.3 16 7.1V8.9Q16 9.7 15.2 9.7H5.2Q4.4 9.7 4.4 8.9V7.1Q4.4 6.3 5.2 6.3Z M0.8 11.6H2.6Q3.4 11.6 3.4 12.4V14.2Q3.4 15 2.6 15H0.8Q0 15 0 14.2V12.4Q0 11.6 0.8 11.6Z M5.2 11.6H15.2Q16 11.6 16 12.4V14.2Q16 15 15.2 15H5.2Q4.4 15 4.4 14.2V12.4Q4.4 11.6 5.2 11.6Z"/></svg>
<div class="t" style="left:371.25px;top:511.46px;font-size:16.4px;color:#333;transform:scaleX(1.0239);transform-origin:0 0;">Additional Details</div>
<div class="r" style="left:354.50px;top:532.90px;width:273.50px;height:1.30px;background:#d8d8dc"></div>
<div class="t" style="left:364.70px;top:547.53px;font-size:10.2px;color:#686868;transform:scaleX(0.9056);transform-origin:0 0;">Club</div>
<div class="r" style="left:456.25px;top:541.25px;width:161.75px;height:22.15px;background:linear-gradient(#fdfdfd,#e6e6e8);border:1px solid #cfcfd2;border-radius:3px;box-shadow:0 1px 1px rgba(0,0,0,0.12)"></div>
<div class="t" style="left:461.80px;top:547.93px;font-size:10.2px;color:#222;transform:scaleX(0.9368);transform-origin:0 0;">Iron Gym 24/7 Fitness</div>
<svg class="r" style="left:608.80px;top:548.30px;" width="5" height="8" viewBox="0 0 5 8" fill="#222"><path d="M0 3.2 L2.5 0 L5 3.2Z M0 4.8 L2.5 8 L5 4.8Z"/></svg>
<div class="t" style="left:364.70px;top:580.33px;font-size:10.2px;color:#686868;transform:scaleX(0.8980);transform-origin:0 0;">Trainer</div>
<div class="r" style="left:456.25px;top:574.00px;width:161.75px;height:22.00px;background:linear-gradient(#fdfdfd,#e6e6e8);border:1px solid #cfcfd2;border-radius:3px;box-shadow:0 1px 1px rgba(0,0,0,0.12)"></div>
<div class="t" style="left:461.80px;top:580.73px;font-size:10.2px;color:#222;transform:scaleX(0.9880);transform-origin:0 0;">N/A</div>
<svg class="r" style="left:608.80px;top:581.00px;" width="5" height="8" viewBox="0 0 5 8" fill="#222"><path d="M0 3.2 L2.5 0 L5 3.2Z M0 4.8 L2.5 8 L5 4.8Z"/></svg>
<svg class="r" style="left:647.80px;top:512.20px;" width="13.6" height="13.6" viewBox="0 0 16 16" fill="#333"><path d="M5 0.5H11Q12 0.5 12 1.5V4H14.5Q15.5 4 15.5 5V11Q15.5 12 14.5 12H12V14.5Q12 15.5 11 15.5H5Q4 15.5 4 14.5V12H1.5Q0.5 12 0.5 11V5Q0.5 4 1.5 4H4V1.5Q4 0.5 5 0.5Z"/></svg>
<div class="t" style="left:665.00px;top:511.06px;font-size:16.4px;color:#333;transform:scaleX(1.0594);transform-origin:0 0;">Medical Information</div>
<div class="r" style="left:647.80px;top:532.90px;width:274.20px;height:1.30px;background:#d8d8dc"></div>
<div class="t" style="left:658.75px;top:547.73px;font-size:10.2px;color:#686868;transform:scaleX(0.8980);transform-origin:0 0;">Emergency</div>
<div class="t" style="left:658.75px;top:561.13px;font-size:10.2px;color:#686868;transform:scaleX(0.8980);transform-origin:0 0;">Contact</div>
<div class="r" style="left:750.00px;top:541.70px;width:162.00px;height:22.60px;background:#fff;border:1px solid #d2d2d6;border-radius:3px;box-shadow:inset 0 1px 1px rgba(0,0,0,0.04)"></div>
<div class="t" style="left:758.50px;top:548.63px;font-size:10.2px;color:#c2c2c6;transform:scaleX(0.9444);transform-origin:0 0;">Name</div>
<div class="t" style="left:658.75px;top:588.53px;font-size:10.2px;color:#686868;transform:scaleX(0.8980);transform-origin:0 0;">Relationship</div>
<div class="r" style="left:750.00px;top:582.70px;width:162.00px;height:22.60px;background:#fff;border:1px solid #d2d2d6;border-radius:3px;box-shadow:inset 0 1px 1px rgba(0,0,0,0.04)"></div>
<div class="t" style="left:758.50px;top:589.63px;font-size:10.2px;color:#c2c2c6;transform:scaleX(0.9590);transform-origin:0 0;">Family Member</div>
</body></html>
